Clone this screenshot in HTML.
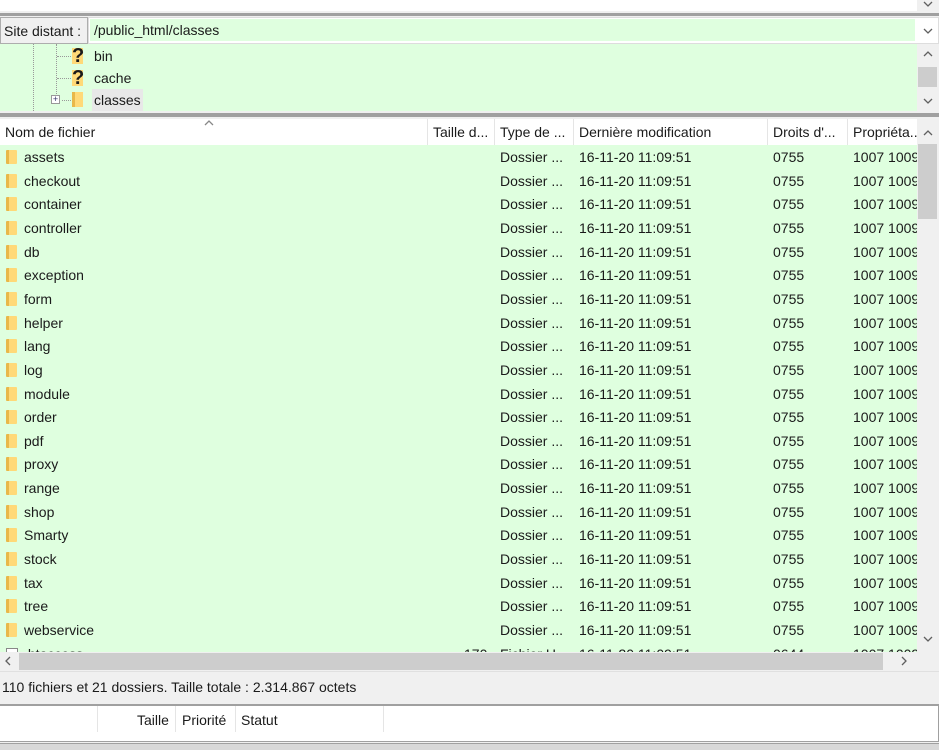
<!DOCTYPE html>
<html><head><meta charset="utf-8"><style>
*{margin:0;padding:0;box-sizing:border-box}
body{width:939px;height:750px;overflow:hidden;background:#f0f0f0;font-family:"Liberation Sans",sans-serif;font-size:14px;color:#1a1a1a;position:relative}
.abs{position:absolute}
.g{background:#dfffdf}
.row{position:absolute;left:0;width:917px;height:24px;line-height:24px;white-space:nowrap}
.row span{position:absolute}
.fold{position:absolute;left:6px;top:5px;width:11px;height:14px;background:linear-gradient(90deg,#e8b84a 0 3px,#ffd978 3px);border-radius:1px}
.hdr span{position:absolute;top:0;line-height:26px}
.sep{position:absolute;top:0;width:1px;height:26px;background:#e5e5e5}
svg.c{position:absolute;width:10px;height:6px}
svg.c polyline{fill:none;stroke:#606060;stroke-width:1.3}
</style></head><body>
<div class="abs" style="left:0;top:0;width:939px;height:11px;background:#fff"></div>
<div class="abs" style="left:917px;top:0;width:22px;height:11px;background:#f0f0f0"></div>
<svg class="c" style="left:923px;top:1px"><polyline points="1,1 5,5 9,1"/></svg>
<div class="abs" style="left:0;top:13px;width:939px;height:3px;background:#a0a0a0"></div>
<div class="abs" style="left:0;top:17px;width:88px;height:27px;line-height:27px;padding-left:3px;background:#f0f0f0;border:1px solid #adadad">Site distant :</div>
<div class="abs" style="left:88px;top:17px;width:851px;height:27px;background:#fff;border:1px solid #ddd"></div>
<div class="abs g" style="left:90px;top:19px;width:825px;height:22px;line-height:22px;padding-left:4px">/public_html/classes</div>
<svg class="c" style="left:923px;top:28px"><polyline points="1,1 5,5 9,1"/></svg>
<div class="abs g" style="left:0;top:44px;width:917px;height:67px"></div>
<div class="abs" style="left:33px;top:44px;width:0;height:67px;border-left:1px dotted #999"></div>
<div class="abs" style="left:56px;top:44px;width:0;height:56px;border-left:1px dotted #999"></div>
<div class="abs" style="left:57px;top:56px;width:14px;border-top:1px dotted #999"></div>
<div class="abs" style="left:57px;top:78px;width:14px;border-top:1px dotted #999"></div>
<div class="abs" style="left:62px;top:100px;width:9px;border-top:1px dotted #999"></div>
<div class="abs" style="left:51px;top:95px;width:9px;height:9px;border:1px solid #999;background:#fff;font-size:9px;line-height:7px;text-align:center;color:#336">+</div>
<div class="abs" style="left:72px;top:48px;width:11px;height:16px;background:#ffd978"></div>
<div class="abs" style="left:72px;top:44px;font-size:20px;font-weight:bold;line-height:24px">?</div>
<div class="abs" style="left:72px;top:70px;width:11px;height:16px;background:#ffd978"></div>
<div class="abs" style="left:72px;top:66px;font-size:20px;font-weight:bold;line-height:24px">?</div>
<div class="abs" style="left:72px;top:92px;width:11px;height:15px;background:linear-gradient(90deg,#e8b84a 0 3px,#ffd978 3px)"></div>
<div class="abs" style="left:94px;top:45px;line-height:22px">bin</div>
<div class="abs" style="left:94px;top:67px;line-height:22px">cache</div>
<div class="abs" style="left:92px;top:89px;line-height:22px;background:#e8e8e8;padding:0 2px">classes</div>
<div class="abs" style="left:917px;top:44px;width:22px;height:67px;background:#f0f0f0"></div>
<svg class="c" style="left:923px;top:51px"><polyline points="1,5 5,1 9,5"/></svg>
<div class="abs" style="left:918px;top:67px;width:19px;height:20px;background:#cdcdcd"></div>
<svg class="c" style="left:923px;top:98px"><polyline points="1,1 5,5 9,1"/></svg>
<div class="abs" style="left:0;top:113px;width:939px;height:4px;background:#a0a0a0"></div>
<div class="abs hdr" style="left:0;top:119px;width:917px;height:26px;background:#fff">
<span style="left:5px">Nom de fichier</span>
<svg class="c" style="left:204px;top:1px"><polyline points="1,5 5,1 9,5" style="stroke:#888"/></svg>
<div class="sep" style="left:427px"></div><span style="left:433px">Taille d...</span>
<div class="sep" style="left:494px"></div><span style="left:500px">Type de ...</span>
<div class="sep" style="left:573px"></div><span style="left:579px">Dernière modification</span>
<div class="sep" style="left:767px"></div><span style="left:773px">Droits d'...</span>
<div class="sep" style="left:847px"></div><span style="left:853px">Propriéta...</span>
</div>
<div class="abs g" style="left:0;top:145px;width:917px;height:507px;overflow:hidden">
<div id="rows"></div>
</div>
<div class="abs" style="left:917px;top:119px;width:22px;height:533px;background:#f0f0f0"></div>
<svg class="c" style="left:923px;top:130px"><polyline points="1,5 5,1 9,5"/></svg>
<div class="abs" style="left:918px;top:144px;width:19px;height:75px;background:#cdcdcd"></div>
<svg class="c" style="left:923px;top:636px"><polyline points="1,1 5,5 9,1"/></svg>
<div class="abs" style="left:0;top:652px;width:917px;height:19px;background:#f0f0f0"></div>
<div class="abs" style="left:19px;top:653px;width:864px;height:17px;background:#cdcdcd"></div>
<svg class="abs" style="left:5px;top:656px" width="6" height="10"><polyline points="5,1 1,5 5,9" fill="none" stroke="#606060" stroke-width="1.3"/></svg>
<svg class="abs" style="left:901px;top:656px" width="6" height="10"><polyline points="1,1 5,5 1,9" fill="none" stroke="#606060" stroke-width="1.3"/></svg>
<div class="abs" style="left:0;top:671px;width:939px;height:30px;line-height:30px;padding-left:2px;background:#f0f0f0;border-top:1px solid #e0e0e0">110 fichiers et 21 dossiers. Taille totale : 2.314.867 octets</div>
<div class="abs" style="left:0;top:704px;width:939px;height:2px;background:#a0a0a0"></div>
<div class="abs" style="left:0;top:706px;width:939px;height:36px;background:#fff;border-right:1px solid #a0a0a0;border-bottom:1px solid #a0a0a0"></div>
<div class="abs" style="left:97px;top:706px;width:1px;height:26px;background:#e5e5e5"></div>
<div class="abs" style="left:175px;top:706px;width:1px;height:26px;background:#e5e5e5"></div>
<div class="abs" style="left:235px;top:706px;width:1px;height:26px;background:#e5e5e5"></div>
<div class="abs" style="left:383px;top:706px;width:1px;height:26px;background:#e5e5e5"></div>
<div class="abs" style="left:137px;top:706px;line-height:28px">Taille</div>
<div class="abs" style="left:182px;top:706px;line-height:28px">Priorité</div>
<div class="abs" style="left:241px;top:706px;line-height:28px">Statut</div>
<div class="abs" style="left:0;top:743px;width:939px;height:7px;background:#d8d8d8;border-top:1px solid #a0a0a0"></div>
<script>
var n=["assets","checkout","container","controller","db","exception","form","helper","lang","log","module","order","pdf","proxy","range","shop","Smarty","stock","tax","tree","webservice"];
var h="";
n.forEach(function(s,i){h+='<div class="row" style="top:'+(i*23.65)+'px"><div class="fold"></div><span style="left:24px">'+s+'</span><span style="left:500px">Dossier ...</span><span style="left:579px">16-11-20 11:09:51</span><span style="left:773px">0755</span><span style="left:853px">1007 1009</span></div>';});
h+='<div class="row" style="top:'+(21*23.65)+'px"><div style="position:absolute;left:6px;top:6px;width:12px;height:15px;border:1px solid #888;background:#fff"></div><span style="left:24px">.htaccess</span><span style="left:464px">170</span><span style="left:500px">Fichier H...</span><span style="left:579px">16-11-20 11:09:51</span><span style="left:773px">0644</span><span style="left:853px">1007 1009</span></div>';
document.getElementById("rows").innerHTML=h;
</script>
</body></html>
